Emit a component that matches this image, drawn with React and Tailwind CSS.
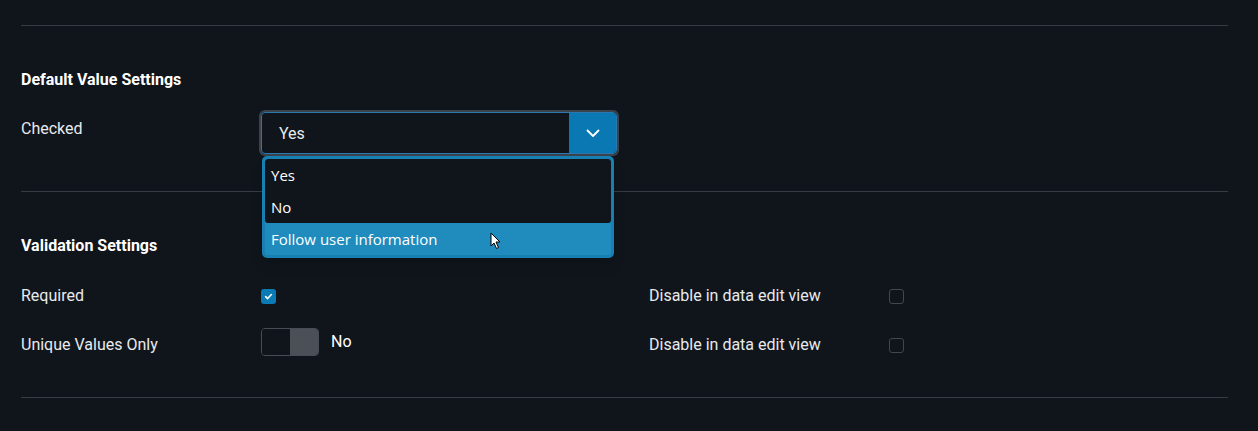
import React from "react";

function Checkbox({ checked }) {
  if (checked) {
    return (
      <span className="flex h-[15px] w-[15px] items-center justify-center rounded-[3px] bg-[#0b7bb5]">
        <svg width="9" height="9" viewBox="0 0 10 10" fill="none">
          <path d="M1.8 5.2 L4 7.3 L8.2 2.8" stroke="#ffffff" strokeWidth="1.8" strokeLinecap="round" strokeLinejoin="round" />
        </svg>
      </span>
    );
  }
  return <span className="block h-[15px] w-[15px] rounded-[3px] border border-[#41474f] bg-[#10151c]" />;
}

function Divider() {
  return <div className="h-px w-full bg-[#363c44]" />;
}

export default function App() {
  const options = ["Yes", "No"];

  return (
    <div className="min-h-[431px] w-full bg-[#10151c] pl-[21px] pr-[30px] pt-[25px] text-[#e8eaed]" style={{ fontFamily: "Roboto, 'Liberation Sans', sans-serif" }}>
      <Divider />

      <h3 className="mt-[44px] text-[16px] font-bold leading-[20px] text-white">Default Value Settings</h3>

      <div className="mt-[22px] grid grid-cols-[240px_1fr]">
        <div className="pt-[6px] text-[16px] leading-[22px]">Checked</div>
        <div className="relative w-[356px]">
          <div className="flex h-[42px] w-[356px] rounded-[4px] border border-[#2c78ae] ring-2 ring-[#3a424c]">
            <div className="flex flex-1 items-center pl-[17px] pt-[1px] text-[16px]">Yes</div>
            <div className="flex w-[47px] items-center justify-center rounded-r-[3px] bg-[#0a79b3]">
              <svg width="14" height="9" viewBox="0 0 14 9" fill="none">
                <path d="M1.5 1.5 L7 7 L12.5 1.5" stroke="#ffffff" strokeWidth="1.8" strokeLinecap="round" strokeLinejoin="round" />
              </svg>
            </div>
          </div>

          <div
            className="absolute left-[1px] top-[44px] z-10 w-[352px] overflow-hidden rounded-[5px] border-[3px] border-[#187fb2] bg-[#1f8cbd] shadow-lg"
            style={{ fontFamily: "'Open Sans', 'Liberation Sans', sans-serif" }}
          >
            <div className="rounded-[3px] bg-[#10151c]">
              {options.map((o) => (
                <div key={o} className="flex h-[32px] items-center pl-[6px] text-[15px] text-white">
                  {o}
                </div>
              ))}
            </div>
            <div className="relative flex h-[32px] items-center pl-[6px] text-[15px] text-white">
              Follow user information
              <svg className="absolute left-[225px] top-[9px]" width="12" height="18" viewBox="0 0 12 18">
                <path d="M1 1 L1 14 L4 11 L6.5 16.5 L8.5 15.5 L6 10 L10 10 Z" fill="#ffffff" stroke="#000000" strokeWidth="1" strokeLinejoin="round" />
              </svg>
            </div>
          </div>
        </div>
      </div>

      <div className="mt-[37px]">
        <Divider />
      </div>

      <h3 className="mt-[44px] text-[16px] font-bold leading-[20px] text-white">Validation Settings</h3>

      <div className="mt-[29px] grid grid-cols-[240px_388px_240px_1fr] items-center gap-y-[21px] text-[16px] leading-[22px]">
        <div>Required</div>
        <div className="flex items-center">
          <Checkbox checked />
        </div>
        <div>Disable in data edit view</div>
        <div className="flex items-center">
          <Checkbox />
        </div>

        <div className="pt-[6px]">Unique Values Only</div>
        <div className="flex items-center gap-[12px]">
          <div className="flex h-[28px] w-[58px] overflow-hidden rounded-[4px] border border-[#474d55]">
            <div className="flex-1 bg-[#10151c]" />
            <div className="flex-1 bg-[#4b5057]" />
          </div>
          <span className="text-[16px] text-white">No</span>
        </div>
        <div className="pt-[6px]">Disable in data edit view</div>
        <div className="flex items-center pt-[6px]">
          <Checkbox />
        </div>
      </div>

      <div className="mt-[41px]">
        <Divider />
      </div>
    </div>
  );
}
